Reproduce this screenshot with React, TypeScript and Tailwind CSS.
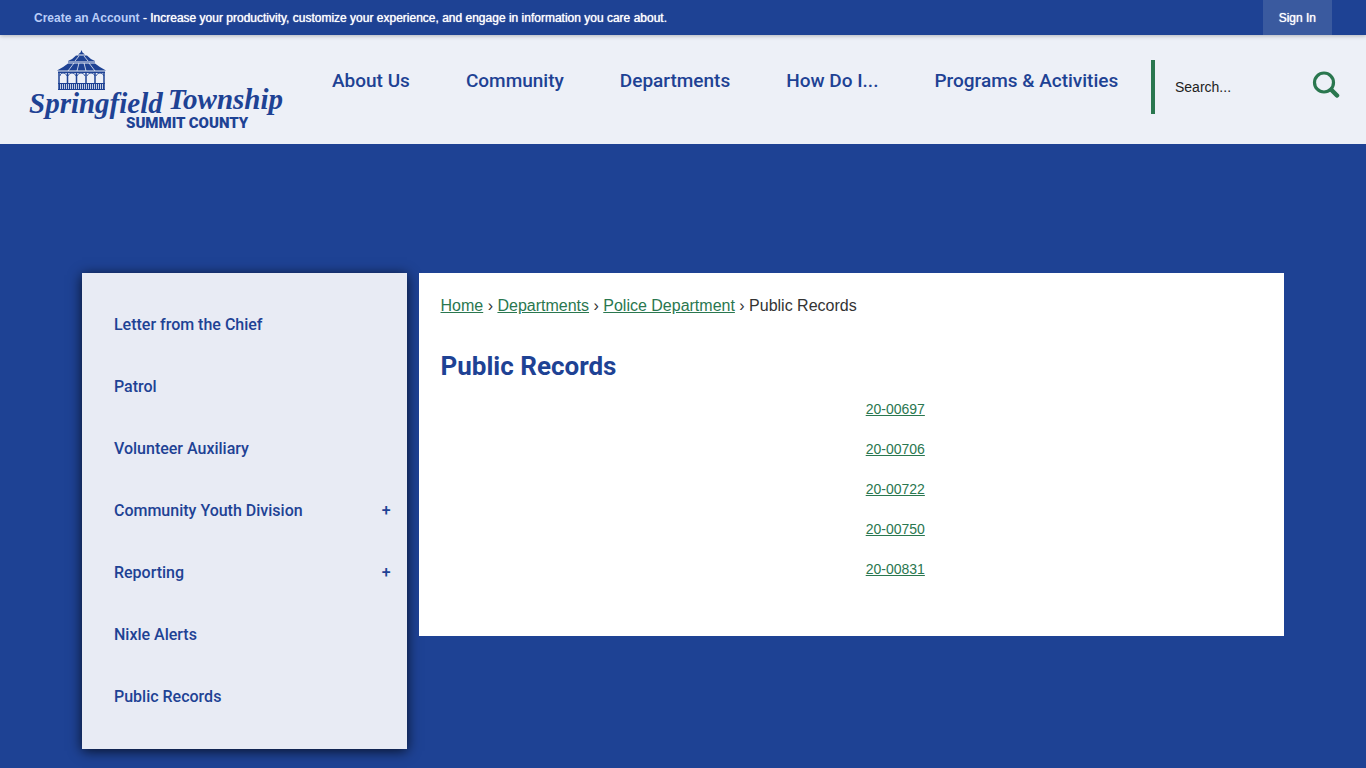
import { useState } from 'react'

const navItems = ['About Us', 'Community', 'Departments', 'How Do I...', 'Programs & Activities']

const sideItems = [
  { label: 'Letter from the Chief', expandable: false },
  { label: 'Patrol', expandable: false },
  { label: 'Volunteer Auxiliary', expandable: false },
  { label: 'Community Youth Division', expandable: true },
  { label: 'Reporting', expandable: true },
  { label: 'Nixle Alerts', expandable: false },
  { label: 'Public Records', expandable: false },
]

const crumbs = ['Home', 'Departments', 'Police Department']
const records = ['20-00697', '20-00706', '20-00722', '20-00750', '20-00831']

function Logo() {
  return (
    <svg width="266" height="88" viewBox="0 0 266 88" role="img" aria-label="Springfield Township Summit County" fill="#1e4294">
      {/* gazebo roof */}
      <path d="M55.500 1l1 2.500 2.500 2h-7l2.500-2z" />
      <path d="M50 6.500h11q3 3.500 8 5.500H42q5-2 8-5.500z" />
      <path d="M42 12.500h27v1H42z" />
      <path d="M42 14.500h27q5 4 11 7H31q6-3 11-7z" />
      <path d="M53 7l-4 5M58 7l4 5M48 14l-6 8M53 14l-2 8M58 14l2 8M63 14l6 8" stroke="#edf0f7" strokeWidth="0.8" fill="none" />
      {/* columns and railing */}
      <path d="M32 22.500h47v1.500H32z" />
      <path d="M33 23v18M41.500 23v12M50.500 23v12M60 23v12M69 23v12M78 23v18" stroke="#1e4294" strokeWidth="1.5" />
      <path d="M34 27q0-3 3-3t4 3M42 27q1-3 4-3t4 3M51 27q1-3 4-3t4 3M61 27q1-3 4-3t4 3M70 27q1-3 4-3t4 3" fill="none" stroke="#1e4294" strokeWidth="0.8" />
      <path d="M32 34h47v1H32zM32 40h47v1H32z" />
      <path d="M33 37.500h45" stroke="#1e4294" strokeWidth="6" strokeDasharray="1.2 0.8" />
      <g fontSize="29" fontStyle="italic" fontWeight="700" fontFamily="'Liberation Serif', serif">
        <text x="3" y="64">Springfield</text>
        <text x="142" y="60">Township</text>
      </g>
      <text x="100" y="79" fontSize="15" fontWeight="900" fontFamily="Roboto, sans-serif">SUMMIT COUNTY</text>
    </svg>
  )
}

export default function App() {
  const [query, setQuery] = useState('')

  return (
    <div className="min-h-screen bg-[#1e4294] font-['Liberation_Sans',sans-serif]">
      <div className="relative flex h-[35px] items-center justify-between px-[34px] text-xs text-white shadow-[0_1px_4px_rgba(0,0,0,0.25)]">
        <p className="[text-shadow:0_0_1px_#ffffff]">
          <a href="#" className="font-bold text-[#b9cdf8] [text-shadow:none]">Create an Account</a> - Increase your productivity, customize your experience, and engage in information you care about.
        </p>
        <button className="h-full bg-[#3a5a9f] px-4 [text-shadow:0_0_1px_#ffffff]">Sign In</button>
      </div>

      <header className="flex h-[109px] items-start bg-[#edf0f7]">
        <a href="#" className="ml-[26px] mt-[14px] shrink-0"><Logo /></a>
        <nav className="ml-10 mt-8 flex flex-1 gap-14 font-[Roboto,sans-serif] text-[19px] leading-7 font-medium text-[#1e4294]">
          {navItems.map(item => (
            <a key={item} href="#" className="whitespace-nowrap">{item}</a>
          ))}
        </nav>
        <form className="mt-[25px] mr-[26px] flex h-[54px] w-[189px] shrink-0 items-center border-l-4 border-[#2a774f] pl-5" onSubmit={e => e.preventDefault()}>
          <input
            type="text"
            aria-label="Search"
            placeholder="Search..."
            value={query}
            onChange={e => setQuery(e.target.value)}
            className="min-w-0 flex-1 bg-transparent text-sm text-black outline-none placeholder:text-[#222222]"
          />
          <button type="submit" aria-label="Search" className="mb-1">
            <svg width="28" height="28" viewBox="0 0 28 28" fill="none" stroke="#2a774f" strokeLinecap="round">
              <circle cx="12" cy="11.5" r="9.5" strokeWidth="3.200" />
              <path d="M19.500 19l5.500 5.500" strokeWidth="4.500" />
            </svg>
          </button>
        </form>
      </header>

      <div className="mx-[6%] flex items-start pt-[129px] pb-[19px]">
        <aside className="mr-[1%] w-[27%] bg-[#e8ebf4] pt-[21px] pb-[21px] shadow-[0_2px_12px_rgba(0,0,0,0.75)]">
          <ul className="font-[Roboto,sans-serif] text-base font-medium text-[#1e4294]">
            {sideItems.map(item => (
              <li key={item.label} className="flex h-[62px] items-center justify-between pr-4 pl-8">
                <a href="#">{item.label}</a>
                {item.expandable && <button aria-label={`Expand ${item.label}`}>+</button>}
              </li>
            ))}
          </ul>
        </aside>

        <main className="w-[72%] bg-white px-[22px] pt-[21px] pb-[57px]">
          <nav aria-label="Breadcrumb" className="text-base text-[#333333]">
            {crumbs.map(crumb => (
              <span key={crumb}>
                <a href="#" className="text-[#2a774f] underline">{crumb}</a>{' › '}
              </span>
            ))}
            <span>Public Records</span>
          </nav>
          <h1 className="mt-8 font-[Roboto,sans-serif] text-[26px] leading-8 font-bold text-[#1e4294]">Public Records</h1>
          <ul className="mt-[17px] space-y-5 pl-[88px] text-center text-sm text-[#2a774f]">
            {records.map(record => (
              <li key={record}><a href="#" className="underline">{record}</a></li>
            ))}
          </ul>
        </main>
      </div>
    </div>
  )
}
